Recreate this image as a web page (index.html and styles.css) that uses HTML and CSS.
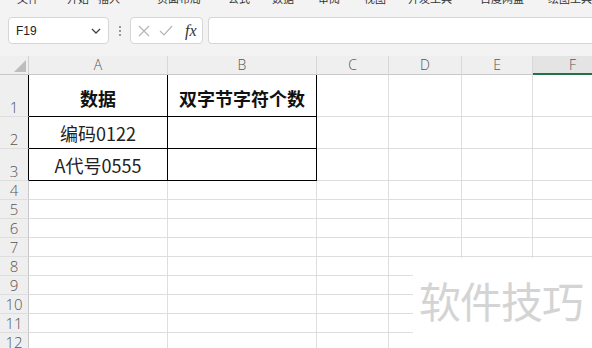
FILE: index.html
```html
<!DOCTYPE html>
<html lang="zh-CN">
<head>
<meta charset="UTF-8">
<title>双字节字符个数</title>
<link rel="stylesheet" href="styles.css">
</head>
<body>

<!-- ribbon tabs, cut off at the top -->
<div class="tabs">
  <div class="tabs-row">
    <span>文件</span><span>开始</span><span>插入</span><span>页面布局</span><span>公式</span><span>数据</span><span>审阅</span><span>视图</span><span>开发工具</span><span>百度网盘</span><span>绘图工具</span>
  </div>
</div>

<!-- formula bar -->
<div class="toolbar">
  <div class="namebox">
    <span>F19</span>
    <svg width="10" height="6" viewBox="0 0 10 6"><path d="M1 1 L5 5 L9 1" fill="none" stroke="#444" stroke-width="1.3"/></svg>
  </div>
  <div class="dots"><i></i><i></i><i></i></div>
  <div class="fbtns">
    <svg width="12" height="12" viewBox="0 0 12 12"><path d="M1 1 L11 11 M11 1 L1 11" stroke="#b5b5b5" stroke-width="1.2"/></svg>
    <svg width="14" height="12" viewBox="0 0 14 12"><path d="M1 6 L5 10 L13 1" fill="none" stroke="#b5b5b5" stroke-width="1.2"/></svg>
    <span class="fx">fx</span>
  </div>
  <div class="finput"></div>
</div>

<!-- sheet -->
<div class="sheet">
  <div class="corner"><b></b></div>
  <div class="ch">A</div><div class="ch">B</div><div class="ch">C</div><div class="ch">D</div><div class="ch">E</div><div class="ch sel">F</div>

  <div class="rh edge">1</div>
  <div class="c box head">数据</div><div class="c box head">双字节字符个数</div><div class="c"></div><div class="c"></div><div class="c"></div><div class="c"></div>

  <div class="rh edge">2</div>
  <div class="c box">编码0122</div><div class="c box"></div><div class="c"></div><div class="c"></div><div class="c"></div><div class="c"></div>

  <div class="rh edge">3</div>
  <div class="c box">A代号0555</div><div class="c box"></div><div class="c"></div><div class="c"></div><div class="c"></div><div class="c"></div>

  <div class="rh">4</div><div class="c"></div><div class="c"></div><div class="c"></div><div class="c"></div><div class="c"></div><div class="c"></div>
  <div class="rh">5</div><div class="c"></div><div class="c"></div><div class="c"></div><div class="c"></div><div class="c"></div><div class="c"></div>
  <div class="rh">6</div><div class="c"></div><div class="c"></div><div class="c"></div><div class="c"></div><div class="c"></div><div class="c"></div>
  <div class="rh">7</div><div class="c"></div><div class="c"></div><div class="c"></div><div class="c"></div><div class="c"></div><div class="c"></div>
  <div class="rh">8</div><div class="c"></div><div class="c"></div><div class="c"></div><div class="c"></div><div class="c"></div><div class="c"></div>
  <div class="rh">9</div><div class="c"></div><div class="c"></div><div class="c"></div><div class="c"></div><div class="c"></div><div class="c"></div>
  <div class="rh">10</div><div class="c"></div><div class="c"></div><div class="c"></div><div class="c"></div><div class="c"></div><div class="c"></div>
  <div class="rh">11</div><div class="c"></div><div class="c"></div><div class="c"></div><div class="c"></div><div class="c"></div><div class="c"></div>
  <div class="rh">12</div><div class="c"></div><div class="c"></div><div class="c"></div><div class="c"></div><div class="c"></div><div class="c"></div>

  <!-- watermark laid over the grid -->
  <div class="watermark">软件技巧</div>
</div>

</body>
</html>
```

FILE: styles.css
```css
body {
  margin: 0;
  width: 592px;
  height: 348px;
  overflow: hidden;
  background-color: #f3f3f3;
  font-family: "Noto Sans CJK SC", "Noto Sans", sans-serif;
  color: #222;
}

/* Tabs */
.tabs {
  height: 8px;
  overflow: hidden;
}

.tabs-row {
  display: grid;
  grid-template-columns: 50px 31px 59px 71px 44px 46px 46px 44px 72px 68px auto;
  padding-left: 17px;
  margin-top: -8px;
  font-size: 11px;
  line-height: 13px;
  color: #333;
  white-space: nowrap;
}

/* Formula bar */
.toolbar {
  display: flex;
  align-items: center;
  height: 48px;
  padding: 5px 0 8px 8px;
  box-sizing: border-box;
}

.namebox,
.fbtns,
.finput {
  height: 27px;
  box-sizing: border-box;
  background-color: #fff;
  border: 1px solid #d6d6d6;
  border-radius: 4px;
}

.namebox {
  width: 101px;
  display: flex;
  align-items: center;
  justify-content: space-between;
  padding: 0 7px;
  font-family: "Liberation Sans", "Noto Sans", sans-serif;
  font-size: 12px;
}

.dots {
  width: 21px;
  display: flex;
  flex-direction: column;
  align-items: center;
  gap: 2px;
}

.dots i {
  width: 2px;
  height: 2px;
  background-color: #999;
}

.fbtns {
  width: 73px;
  display: flex;
  align-items: center;
  gap: 9px;
  padding-left: 7px;
}

.fx {
  font-family: "Liberation Serif", serif;
  font-style: italic;
  font-size: 16px;
  color: #333;
  margin-left: 3px;
}

.finput {
  flex: 1;
  margin-left: 5px;
  border-right: none;
  border-radius: 4px 0 0 4px;
}

/* Sheet grid */
.sheet {
  position: relative;
  display: grid;
  grid-template-columns: 29px 139px 149px 72px 73px 71px 80px;
  grid-template-rows: 19px 42px 32px 32px repeat(9, 19px);
  background-color: #fff;
}

.sheet > div {
  box-sizing: border-box;
}

.corner {
  background-color: #efefef;
  border-right: 1px solid #d0d0d0;
  border-bottom: 1px solid #c8c8c8;
  display: flex;
  align-items: flex-end;
  justify-content: flex-end;
  padding: 0 2px 2px 0;
}

.corner b {
  width: 0;
  height: 0;
  border-left: 12px solid transparent;
  border-bottom: 12px solid #bdbdbd;
}

.ch {
  background-color: #efefef;
  border-right: 1px solid #d8d8d8;
  border-bottom: 1px solid #c8c8c8;
  text-align: center;
  font-family: "Open Sans", "Noto Sans", sans-serif;
  font-weight: 300;
  font-size: 14px;
  line-height: 18px;
  color: #555;
}

.ch.sel {
  background-color: #e4e4e4;
  border-bottom: 2px solid #217346;
}

.rh {
  background-color: #efefef;
  border-right: 1px solid #c8c8c8;
  border-bottom: 1px solid #dedede;
  display: flex;
  align-items: flex-end;
  justify-content: center;
  font-family: "Open Sans", "Noto Sans", sans-serif;
  font-weight: 300;
  font-size: 15px;
  line-height: 17px;
  color: #555;
}

.rh.edge {
  border-right-color: #000;
}

.c {
  border-right: 1px solid #dedede;
  border-bottom: 1px solid #dedede;
  display: flex;
  align-items: flex-end;
  justify-content: center;
  font-size: 18px;
  line-height: 24px;
  padding-bottom: 3px;
  color: #222;
  white-space: nowrap;
}

.c.box {
  border-right-color: #000;
  border-bottom-color: #000;
}

.c.head {
  font-weight: bold;
  color: #111;
  padding-bottom: 6px;
}

/* Watermark */
.watermark {
  position: absolute;
  left: 413px;
  top: 202px;
  width: 179px;
  height: 100px;
  background-color: #fff;
  padding: 18px 0 0 6px;
  box-sizing: border-box;
  font-size: 42px;
  line-height: 48px;
  letter-spacing: -1px;
  color: #d4d4d4;
  white-space: nowrap;
}
```
